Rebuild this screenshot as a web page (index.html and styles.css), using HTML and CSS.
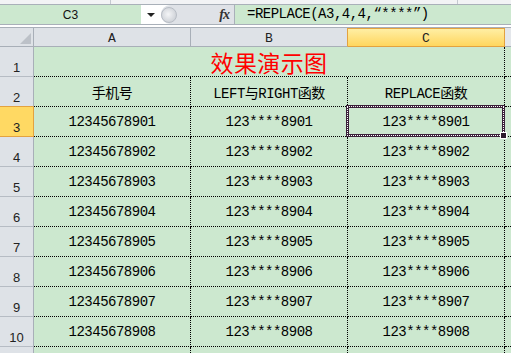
FILE: index.html
```html
<!DOCTYPE html>
<html lang="zh">
<head>
  <meta charset="UTF-8">
  <title>REPLACE函数</title>
  <link rel="stylesheet" href="styles.css">
</head>
<body>
  <div class="topstrip">
    <span class="seg seg-a"></span>
    <span class="seg seg-b"></span>
  </div>
  <div class="fbar">
    <div class="namebox">C3</div>
    <div class="drop"></div>
    <div class="ctrl">
      <span class="knob"></span>
      <span class="fx">fx</span>
    </div>
    <div class="formula">=REPLACE(A3,4,4,“****”)</div>
  </div>
  <div class="gap"></div>

  <div class="sheet" id="sheet">
    <!-- 列标题 -->
    <div class="hd corner"></div>
    <div class="hd">A</div>
    <div class="hd before-active">B</div>
    <div class="hd active">C</div>
    <div class="hd spare"></div>

    <!-- 第1行：合并单元格标题 -->
    <div class="rh">1</div>
    <div class="c title">效果演示图</div>
    <div class="c spare"></div>

    <!-- 第2行：表头 -->
    <div class="rh before-active">2</div>
    <div class="c">手机号</div>
    <div class="c">LEFT与RIGHT函数</div>
    <div class="c">REPLACE函数</div>
    <div class="c spare"></div>
  </div>

  <script>
    const sheet = document.getElementById("sheet");
    let html = "";

    for (let i = 1; i <= 8; i++) {
      const row = i + 2;
      const phone = "1234567890" + i;
      const masked = "123****890" + i;
      const isActive = row === 3;

      html += `<div class="rh${isActive ? " active" : ""}">${row}</div>`;
      html += `<div class="c">${phone}</div>`;
      html += `<div class="c">${masked}</div>`;
      if (isActive) {
        html += `<div class="c sel-cell">${masked}<span class="sel"><span class="handle"></span></span></div>`;
      } else {
        html += `<div class="c">${masked}</div>`;
      }
      html += `<div class="c spare"></div>`;
    }

    // 第11行只露出一点
    html += `<div class="rh"></div><div class="c"></div><div class="c"></div><div class="c"></div><div class="c spare"></div>`;
    sheet.insertAdjacentHTML("beforeend", html);
  </script>
</body>
</html>
```

FILE: styles.css
```css
html, body {
  height: 100%;
}
body {
  margin: 0;
  background: #fff;
  font-family: "Liberation Mono", "Noto Sans CJK SC", monospace;
  overflow: hidden;
  display: flex;
  flex-direction: column;
}
.topstrip {
  height: 4px;
  flex-shrink: 0;
  background: #f2f3f5;
  border-bottom: 1px solid #a9b0b9;
  display: flex;
}
.seg {
  height: 4px;
  border-right: 1px solid #c4c9d0;
}
.seg-a { width: 110px; }
.seg-b { width: 346px; }

.fbar {
  display: flex;
  flex-shrink: 0;
  height: 19px;
  border-bottom: 1px solid #a9b0b9;
}
.namebox {
  width: 141px;
  background: #cce8cf;
  display: flex;
  align-items: center;
  justify-content: center;
  font: 12px "Liberation Sans", sans-serif;
  color: #111;
}
.drop {
  width: 20px;
  background: #fff;
  display: flex;
  align-items: center;
  justify-content: center;
}
.drop::after {
  content: "";
  border-left: 4px solid transparent;
  border-right: 4px solid transparent;
  border-top: 4px solid #222;
  margin-top: 1px;
}
.ctrl {
  width: 74px;
  background: #dfe2e7;
  border-right: 1px solid #a9b0b9;
  border-radius: 9px 0 0 9px;
  display: flex;
  align-items: center;
  justify-content: space-between;
  padding-right: 5px;
  box-sizing: border-box;
}
.knob {
  width: 14px;
  height: 14px;
  border-radius: 50%;
  border: 1px solid #b8bdc5;
  background: radial-gradient(circle at 45% 45%, #f4f5f7 0, #d6d9de 60%, #c3c7cd 100%);
}
.fx {
  font: italic bold 14px "Liberation Serif", serif;
  color: #333;
  letter-spacing: -1px;
}
.formula {
  flex: 1;
  background: #cce8cf;
  padding-left: 12px;
  font-size: 14px;
  letter-spacing: -0.5px;
  line-height: 19px;
  color: #000;
  white-space: nowrap;
}
.gap {
  height: 2px;
  flex-shrink: 0;
  background: #fff;
  border-bottom: 1px solid #a9b0b9;
}

.sheet {
  flex: 1;
  min-height: 0;
  overflow: hidden;
  display: grid;
  grid-template-columns: 34px 157px 157px 157px 1fr;
  grid-template-rows: 19px;
  grid-auto-rows: 30px;
}
.hd {
  background: #dee2e7;
  border-right: 1px solid #a8afb8;
  border-bottom: 1px solid #a8afb8;
  display: flex;
  align-items: center;
  justify-content: center;
  font-size: 13px;
  color: #222;
  padding-top: 2px;
  box-sizing: border-box;
}
.hd.corner {
  position: relative;
}
.hd.corner::after {
  content: "";
  position: absolute;
  right: 2px;
  bottom: 2px;
  border-left: 11px solid transparent;
  border-bottom: 11px solid #bcc1c8;
}
.hd.before-active {
  border-right-color: #e3a23f;
}
.hd.active {
  background: linear-gradient(#fff0a8, #ffd65e);
  border-right-color: #e3a23f;
  border-bottom-color: #e3a23f;
  box-shadow: inset 0 1px #e3a23f;
}
.hd.spare {
  border-right: none;
  background: #e4e7eb;
}

.rh {
  background: #dee2e7;
  border-right: 1px solid #a8afb8;
  border-bottom: 1px solid #b6bcc4;
  display: flex;
  align-items: flex-end;
  justify-content: center;
  padding-bottom: 1px;
  box-sizing: border-box;
  font: 13px "Liberation Sans", sans-serif;
  color: #222;
}
.rh.before-active {
  border-bottom-color: #e3a23f;
}
.rh.active {
  background: #ffd963;
  border-right-color: #e3a23f;
  border-bottom-color: #e3a23f;
}

.c {
  background: #cce8cf;
  border-right: 1px dotted #000;
  border-bottom: 1px dotted #000;
  display: flex;
  align-items: center;
  justify-content: center;
  font-size: 14px;
  letter-spacing: -0.5px;
  color: #000;
  white-space: nowrap;
  padding-top: 1px;
  box-sizing: border-box;
}
.c.spare {
  border-right: none;
}
.c.title {
  grid-column: 2 / 5;
  color: #ff0000;
  font: 23px "Noto Sans CJK SC", sans-serif;
  letter-spacing: 0.4px;
}

.sel-cell {
  position: relative;
}
.sel {
  position: absolute;
  top: -2px;
  left: -2px;
  right: -1px;
  bottom: -1px;
  border: 3px solid #3a2039;
}
.sel::before {
  content: "";
  position: absolute;
  top: -2px;
  left: -2px;
  right: -2px;
  bottom: -2px;
  border: 1px dotted #fff;
}
.handle {
  position: absolute;
  right: -5px;
  bottom: -5px;
  width: 5px;
  height: 5px;
  background: #2c1a2c;
  border: 1px solid #fff;
  z-index: 2;
}
```
